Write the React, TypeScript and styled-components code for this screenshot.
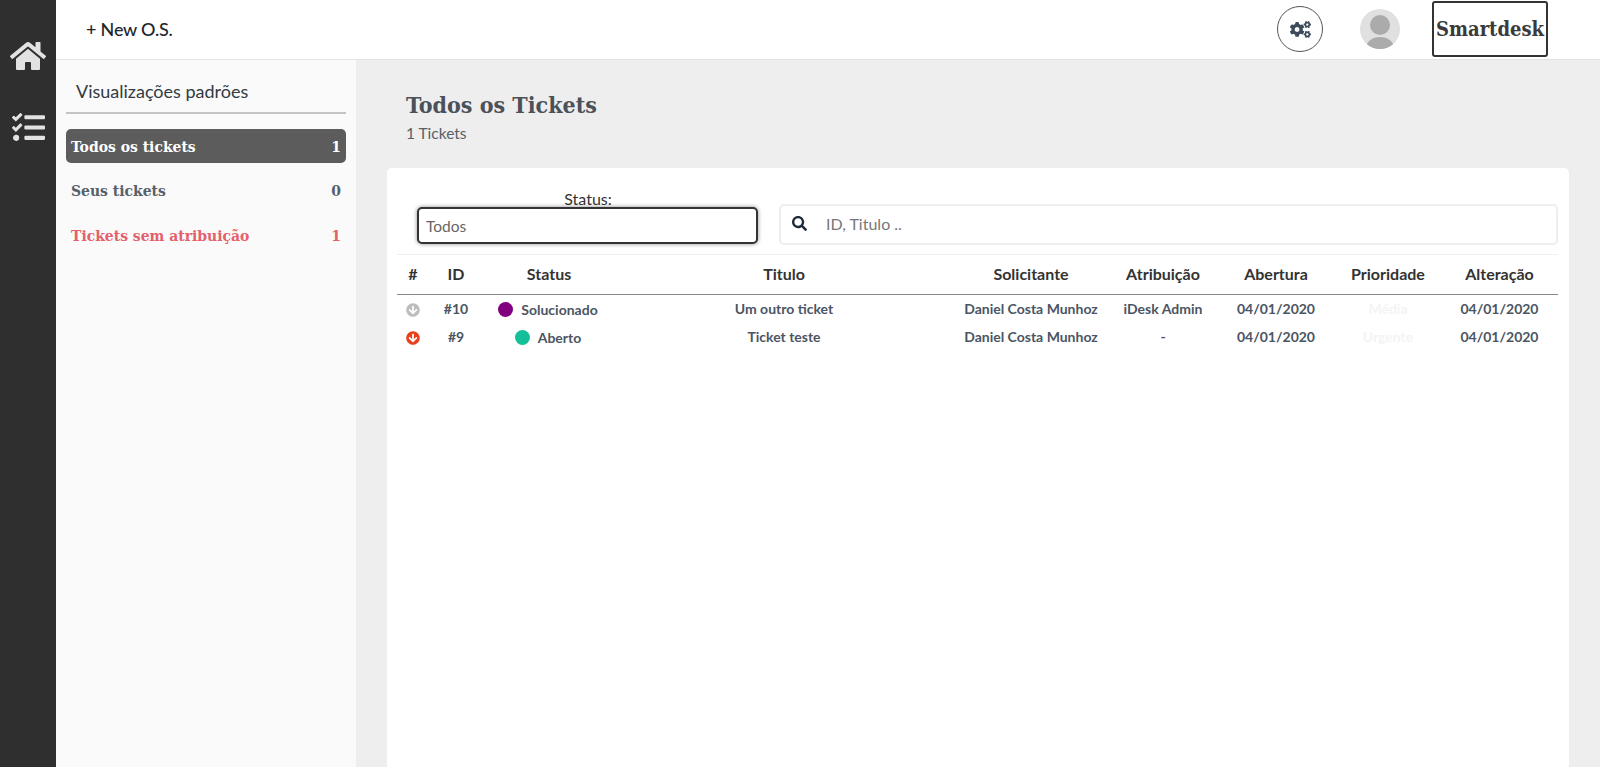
import React from "react";
import styled, { createGlobalStyle } from "styled-components";
import { FaHome, FaTasks, FaCogs, FaSearch, FaArrowCircleDown } from "react-icons/fa";

const SLAB = `"DejaVu Serif Condensed", "DejaVu Serif", serif`;
const SANS = `Lato, "Liberation Sans", sans-serif`;

const Global = createGlobalStyle`
  html, body { margin: 0; padding: 0; height: 100%; overflow: hidden; background: #eee; }
  * { box-sizing: border-box; }
  body { font-family: ${SANS}; }
`;

const Shell = styled.div`display: flex; height: 767px; overflow: hidden;`;
const Rail = styled.nav`
  width: 56px; flex: none; background: #2f2f2f; color: #e2e2e2;
  display: flex; flex-direction: column; align-items: center; padding-top: 40px; gap: 39px;
`;
const RailIcon = styled.span`display: flex; font-size: ${(p: { $size: number }) => p.$size}px; height: 32px; align-items: center;`;
const Column = styled.div`flex: 1; min-width: 0; display: flex; flex-direction: column;`;
const TopBar = styled.header`
  height: 60px; flex: none; background: #fff; border-bottom: 1px solid #e2e2e2;
  display: flex; align-items: center; padding: 0 52px 1px 30px;
`;
const NewOrder = styled.a`font-size: 18px; font-weight: 500; color: #22262b; letter-spacing: -0.2px; margin-bottom: 1px;`;
const Spacer = styled.div`flex: 1;`;
const GearButton = styled.button`
  width: 46px; height: 46px; border-radius: 50%; border: 1px solid #555; background: #fff; color: #3c4a5a;
  display: flex; align-items: center; justify-content: center; font-size: 21px; padding: 0; margin-right: 37px;
`;
const Avatar = styled.svg`width: 40px; height: 40px; border-radius: 50%; margin-right: 32px; display: block;`;
const Brand = styled.div`
  width: 116px; height: 56px; border: 2px solid #333; border-radius: 3px; color: #3a3a3a;
  font-family: ${SLAB}; font-weight: 700; font-size: 20px; display: flex; align-items: center; justify-content: center;
`;
const Body = styled.div`flex: 1; display: flex; min-height: 0;`;
const SidePanel = styled.aside`width: 300px; flex: none; background: #fafafa; padding: 20px 10px 0;`;
const PanelTitle = styled.div`
  font-size: 18px; color: #333a42; padding: 0 0 9px 10px; border-bottom: 2px solid #c4c4c4; line-height: 23px; margin-bottom: 15px;
`;
const ViewItem = styled.div<{ $kind?: "active" | "alert" }>`
  height: 34px; margin-bottom: 10.5px; border-radius: 5px; padding: 0 5px; display: flex; align-items: center; justify-content: space-between;
  font-family: ${SLAB}; font-size: 15.5px; font-weight: 700;
  background: ${(p) => (p.$kind === "active" ? "#5c5c5c" : "transparent")};
  color: ${(p) => (p.$kind === "active" ? "#fff" : p.$kind === "alert" ? "#e4606a" : "#56606a")};
`;
const Main = styled.main`flex: 1; min-width: 0; padding: 29px 31px 0; display: flex; flex-direction: column;`;
const PageHead = styled.div`padding: 0 0 0 19px; height: 79px;`;
const PageTitle = styled.h1`margin: 0; font-family: ${SLAB}; font-size: 23px; line-height: 31px; font-weight: 700; color: #4b5159;`;
const PageCount = styled.div`font-size: 15.5px; line-height: 22px; color: #55606b; margin-top: 2px;`;
const Card = styled.section`flex: 1; background: #fff; border-radius: 5px 5px 0 0; padding: 0 11px 0 10px;`;
const Filters = styled.div`
  display: flex; align-items: flex-end; height: 87px; padding-bottom: 10px; border-bottom: 1px solid #efefef; gap: 21px;
`;
const StatusField = styled.label`width: 341px; margin-left: 20px; display: flex; flex-direction: column; align-items: center;`;
const StatusLabel = styled.span`font-size: 16px; color: #333; line-height: 18px; margin-bottom: -1px; margin-left: 1px;`;
const Select = styled.div`
  width: 100%; height: 37px; border: 2px solid #333; border-radius: 5px; box-shadow: 0 0 4px rgba(0,0,0,.45);
  font-size: 15.5px; color: #666; display: flex; align-items: center; padding: 0 0 0 7px; background: #fff;
`;
const SearchBox = styled.div`
  flex: 1; height: 41px; margin-bottom: -1px; border: 2px solid #eee; border-radius: 5px; display: flex; align-items: center; padding: 0 0 2px 11px;
  font-size: 16px; color: #777; gap: 19px;
`;
const SearchGlyph = styled.span`display: flex; font-size: 15px; color: #1d2a38;`;
const Table = styled.table`width: 100%; border-collapse: collapse; table-layout: fixed;`;
const Th = styled.th`
  height: 39px; padding: 0 0 1px; font-size: 16px; font-weight: 700; color: #333; text-align: center; border-bottom: 1px solid #8a8a8a;
`;
const Td = styled.td`height: 28px; padding: 0; font-size: 14px; font-weight: 700; color: #4b5563; text-align: center;`;
const StatusCell = styled.span`display: inline-flex; align-items: center; gap: 8px; position: relative; top: 2px; margin-left: -2px;`;
const Dot = styled.span<{ $color: string }>`width: 15px; height: 15px; border-radius: 50%; background: ${(p) => p.$color};`;
const ArrowIcon = styled.span<{ $color: string }>`display: inline-flex; font-size: 14px; color: ${(p) => p.$color}; vertical-align: middle;`;
const Faint = styled.span`color: #f4f4f4;`;

const widths = [32, 54, 132, 338, 156, 108, 118, 106, 117];
const heads = ["#", "ID", "Status", "Titulo", "Solicitante", "Atribuição", "Abertura", "Prioridade", "Alteração"];
const rows = [
  { arrow: "#bdbdbd", id: "#10", dot: "#800080", status: "Solucionado", title: "Um outro ticket", who: "iDesk Admin", pr: "Média" },
  { arrow: "#e8401c", id: "#9", dot: "#14c09a", status: "Aberto", title: "Ticket teste", who: "-", pr: "Urgente" },
];

export default function App() {
  return (
    <Shell>
      <Global />
      <Rail>
        <RailIcon $size={36}><FaHome /></RailIcon>
        <RailIcon $size={33}><FaTasks /></RailIcon>
      </Rail>
      <Column>
        <TopBar>
          <NewOrder>+ New O.S.</NewOrder>
          <Spacer />
          <GearButton><FaCogs /></GearButton>
          <Avatar viewBox="0 0 40 40">
            <rect width="40" height="40" fill="#e0e0e0" />
            <circle cx="20" cy="16" r="10" fill="#ababab" />
            <ellipse cx="20" cy="39" rx="14" ry="11" fill="#ababab" />
          </Avatar>
          <Brand>Smartdesk</Brand>
        </TopBar>
        <Body>
          <SidePanel>
            <PanelTitle>Visualizações padrões</PanelTitle>
            <ViewItem $kind="active"><span>Todos os tickets</span><span>1</span></ViewItem>
            <ViewItem><span>Seus tickets</span><span>0</span></ViewItem>
            <ViewItem $kind="alert"><span>Tickets sem atribuição</span><span>1</span></ViewItem>
          </SidePanel>
          <Main>
            <PageHead>
              <PageTitle>Todos os Tickets</PageTitle>
              <PageCount>1 Tickets</PageCount>
            </PageHead>
            <Card>
              <Filters>
                <StatusField>
                  <StatusLabel>Status:</StatusLabel>
                  <Select>Todos</Select>
                </StatusField>
                <SearchBox>
                  <SearchGlyph><FaSearch /></SearchGlyph>
                  <span>ID, Titulo ..</span>
                </SearchBox>
              </Filters>
              <Table>
                <colgroup>{widths.map((w, i) => <col key={i} width={w} />)}</colgroup>
                <thead><tr>{heads.map((h) => <Th key={h}>{h}</Th>)}</tr></thead>
                <tbody>
                  {rows.map((r) => (
                    <tr key={r.id}>
                      <Td><ArrowIcon $color={r.arrow}><FaArrowCircleDown /></ArrowIcon></Td>
                      <Td>{r.id}</Td>
                      <Td><StatusCell><Dot $color={r.dot} /><span>{r.status}</span></StatusCell></Td>
                      <Td>{r.title}</Td>
                      <Td>Daniel Costa Munhoz</Td>
                      <Td>{r.who}</Td>
                      <Td>04/01/2020</Td>
                      <Td><Faint>{r.pr}</Faint></Td>
                      <Td>04/01/2020</Td>
                    </tr>
                  ))}
                </tbody>
              </Table>
            </Card>
          </Main>
        </Body>
      </Column>
    </Shell>
  );
}
